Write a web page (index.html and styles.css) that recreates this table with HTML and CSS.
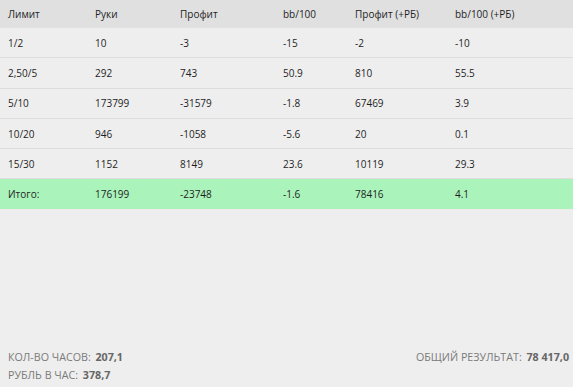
FILE: index.html
```html
<!DOCTYPE html>
<html lang="ru">
<head>
<meta charset="utf-8">
<link rel="stylesheet" href="styles.css">
</head>
<body>
<div class="page">
  <table class="stats">
    <colgroup>
      <col class="c1"><col class="c2"><col class="c3"><col class="c4"><col class="c5"><col class="c6">
    </colgroup>
    <thead>
      <tr><th>Лимит</th><th>Руки</th><th>Профит</th><th>bb/100</th><th>Профит (+РБ)</th><th>bb/100 (+РБ)</th></tr>
    </thead>
    <tbody>
      <tr><td>1/2</td><td>10</td><td>-3</td><td>-15</td><td>-2</td><td>-10</td></tr>
      <tr><td>2,50/5</td><td>292</td><td>743</td><td>50.9</td><td>810</td><td>55.5</td></tr>
      <tr><td>5/10</td><td>173799</td><td>-31579</td><td>-1.8</td><td>67469</td><td>3.9</td></tr>
      <tr><td>10/20</td><td>946</td><td>-1058</td><td>-5.6</td><td>20</td><td>0.1</td></tr>
      <tr><td>15/30</td><td>1152</td><td>8149</td><td>23.6</td><td>10119</td><td>29.3</td></tr>
      <tr class="total"><td>Итого:</td><td>176199</td><td>-23748</td><td>-1.6</td><td>78416</td><td>4.1</td></tr>
    </tbody>
  </table>
  <div class="footer">
    <div class="left">
      <div class="stat"><span class="label">КОЛ-ВО ЧАСОВ:</span> <b>207,1</b></div>
      <div class="stat"><span class="label">РУБЛЬ В ЧАС:</span> <b>378,7</b></div>
    </div>
    <div class="right">
      <div class="stat"><span class="label">ОБЩИЙ РЕЗУЛЬТАТ:</span> <b>78 417,0</b></div>
    </div>
  </div>
</div>
</body>
</html>
```

FILE: styles.css
```css
html, body {
  margin: 0;
  padding: 0;
  background: #eeeeee;
}
body {
  font-family: "Open Sans", "Noto Sans", "DejaVu Sans", sans-serif;
  font-size: 10px;
  color: #1e1e1e;
}
.page {
  width: 573px;
  height: 387px;
  display: flex;
  flex-direction: column;
}
.stats {
  width: 100%;
  border-collapse: collapse;
  table-layout: fixed;
}
.c1 { width: 87px; }
.c2 { width: 85px; }
.c3 { width: 103px; }
.c4 { width: 72px; }
.c5 { width: 100px; }
.c6 { width: auto; }
.stats th {
  background: #e0e0e0;
  height: 28px;
  padding: 0 0 0 8px;
  text-align: left;
  font-weight: normal;
  vertical-align: middle;
}
.stats td {
  height: 29.3px;
  padding: 0 0 0 8px;
  border-bottom: 1px solid #dddddd;
  vertical-align: middle;
}
.stats tr.total td {
  background: #aaf3bb;
  border-bottom: none;
}
.footer {
  margin-top: auto;
  display: flex;
  justify-content: space-between;
  padding: 0 4px 3px 8px;
  color: #7a7a7a;
  font-size: 10.7px;
}
.stat {
  height: 18px;
  line-height: 18px;
}
.stat b {
  color: #666666;
  font-weight: bold;
  margin-left: 2px;
}
```
